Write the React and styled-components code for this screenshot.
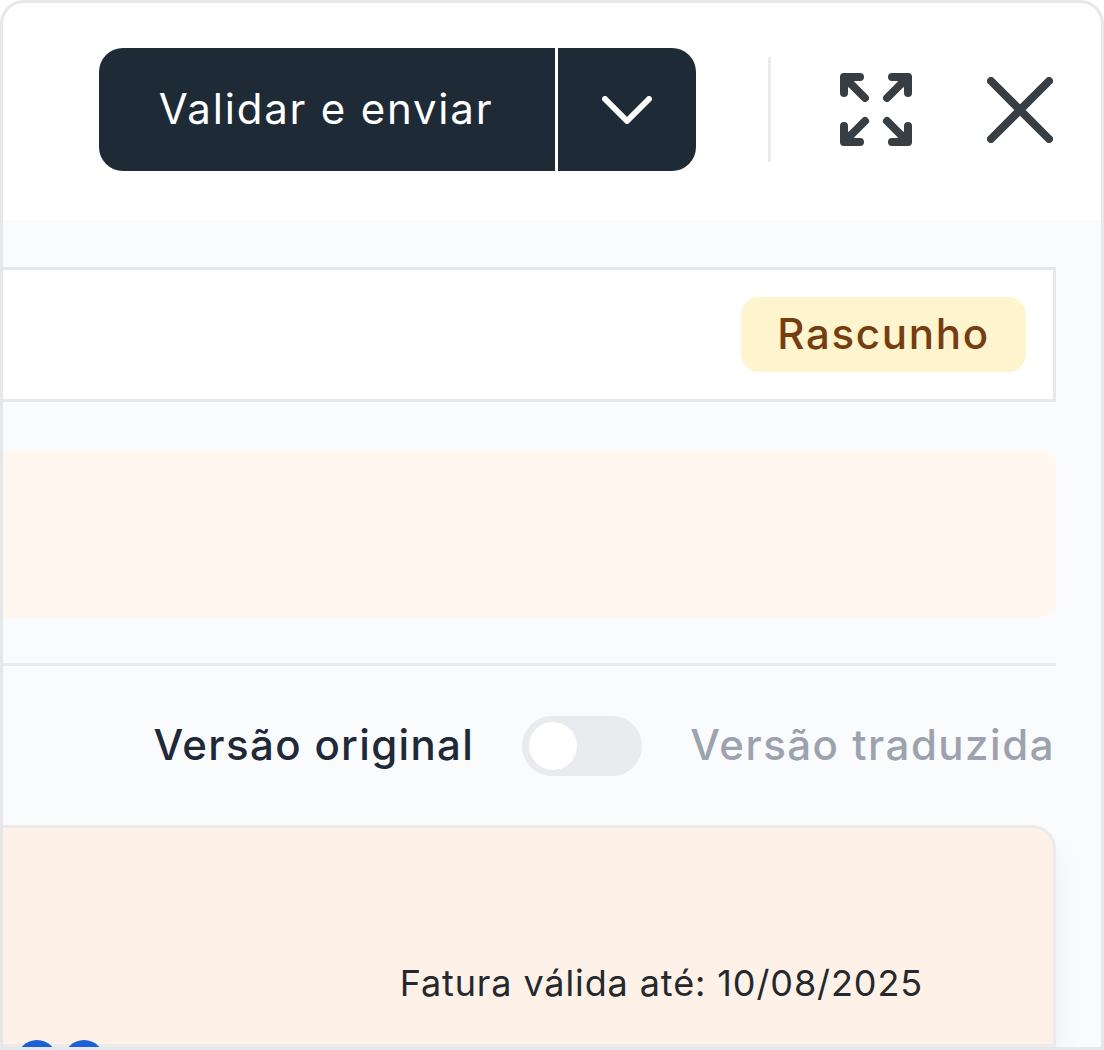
import React from 'react';
import styled, { createGlobalStyle } from 'styled-components';

const GlobalStyle = createGlobalStyle`
  html, body {
    margin: 0;
    padding: 0;
    background: #fff;
  }
  * {
    box-sizing: border-box;
  }
`;

const Frame = styled.div`
  width: 1104px;
  height: 1050px;
  display: flex;
  flex-direction: column;
  overflow: hidden;
  background: #fafbfd;
  border: 3px solid #e5e7eb;
  border-radius: 24px 24px 0 0;
  font-family: Inter, 'Liberation Sans', sans-serif;
`;

const Header = styled.header`
  height: 217px;
  flex-shrink: 0;
  display: flex;
  align-items: flex-start;
  justify-content: flex-end;
  padding: 45px 48px 0 0;
  background: #fff;
`;

const SplitButton = styled.div`
  display: flex;
  width: 597px;
  height: 123px;
  border-radius: 24px;
  overflow: hidden;
  background: #1f2a37;
  color: #fff;
`;

const MainAction = styled.div`
  width: 459px;
  display: flex;
  align-items: center;
  justify-content: center;
  padding: 0 2px 3px 0;
  border-right: 3px solid #fff;
  font-size: 42px;
  font-weight: 400;
  letter-spacing: 1.8px;
`;

const CaretAction = styled.div`
  flex: 1;
  display: flex;
  align-items: center;
  justify-content: center;
`;

const HeaderDivider = styled.div`
  width: 3px;
  height: 105px;
  margin: 9px 0 0 72px;
  background: #e9ebee;
`;

const IconSlot = styled.div`
  display: flex;
  margin: ${(p) => p.$margin};
  color: #373e44;
`;

const Body = styled.main`
  flex: 1;
  display: flex;
  flex-direction: column;
  padding: 47px 45px 0 0;
`;

const StatusRow = styled.div`
  height: 135px;
  flex-shrink: 0;
  display: flex;
  align-items: center;
  justify-content: flex-end;
  padding-right: 27px;
  background: #fff;
  border: 3px solid #e5e7eb;
  border-left: 0;
`;

const Badge = styled.span`
  width: 285px;
  height: 75px;
  display: flex;
  align-items: center;
  justify-content: center;
  padding-bottom: 3px;
  border-radius: 18px;
  background: #fef4cd;
  color: #753d10;
  font-size: 42px;
  font-weight: 500;
  letter-spacing: 1.7px;
`;

const Notice = styled.div`
  height: 168px;
  flex-shrink: 0;
  margin-top: 48px;
  border-radius: 0 18px 18px 0;
  background: #fff7f0;
`;

const Rule = styled.hr`
  width: 100%;
  height: 3px;
  flex-shrink: 0;
  margin: 45px 0 0;
  border: 0;
  background: #e9ebee;
`;

const ToggleRow = styled.div`
  height: 159px;
  flex-shrink: 0;
  display: flex;
  align-items: center;
  justify-content: flex-end;
  gap: 48px;
  padding-right: 1px;
`;

const ToggleLabel = styled.span`
  padding-bottom: 3px;
  font-size: 42px;
  font-weight: 500;
  letter-spacing: ${(p) => (p.$muted ? '1.5px' : '1.35px')};
  color: ${(p) => (p.$muted ? '#9ca3af' : '#1f2937')};
`;

const Toggle = styled.div`
  width: 120px;
  height: 60px;
  display: flex;
  align-items: center;
  padding-left: 7px;
  border-radius: 30px;
  background: #e9ebee;
`;

const Knob = styled.div`
  width: 48px;
  height: 48px;
  border-radius: 50%;
  background: #fff;
`;

const Card = styled.section`
  flex: 1;
  position: relative;
  display: flex;
  flex-direction: column;
  justify-content: flex-end;
  background: #fef1e7;
  border: 3px solid #e9ebee;
  border-left: 0;
  border-radius: 0 24px 0 0;
  box-shadow: 0 20px 30px rgba(17, 24, 39, 0.06);
`;

const Validity = styled.p`
  margin: 0 0 39px;
  padding-right: 130px;
  text-align: right;
  font-size: 36px;
  font-weight: 400;
  letter-spacing: 0.89px;
  color: #25292e;
`;

const Dots = styled.div`
  position: absolute;
  top: 212px;
  left: 14px;
  display: flex;
  gap: 7px;
`;

const Dot = styled.span`
  width: 40px;
  height: 40px;
  border-radius: 50%;
  background: #1d5fd6;
`;

const Chevron = () => (
  <svg width="50" height="28" viewBox="0 0 50 28" fill="none" stroke="currentColor" strokeWidth="6" strokeLinecap="round" strokeLinejoin="round">
    <path d="M3 3 L25 25 L47 3" />
  </svg>
);

const ExpandIcon = () => (
  <svg width="72" height="73" viewBox="0 0 72 73" fill="currentColor" stroke="currentColor" strokeWidth="8" strokeLinecap="round" strokeLinejoin="round">
    <path d="M4 4 H20 M4 4 V20 M4 4 L25 25 M4 4 L13 4 L4 13 Z" />
    <path d="M68 4 H52 M68 4 V20 M68 4 L47 25 M68 4 L59 4 L68 13 Z" />
    <path d="M4 69 H20 M4 69 V53 M4 69 L25 48 M4 69 L13 69 L4 60 Z" />
    <path d="M68 69 H52 M68 69 V53 M68 69 L47 48 M68 69 L59 69 L68 60 Z" />
  </svg>
);

const CloseIcon = () => (
  <svg width="66" height="66" viewBox="0 0 66 66" fill="none" stroke="currentColor" strokeWidth="8" strokeLinecap="round">
    <path d="M4 4 L62 62 M62 4 L4 62" />
  </svg>
);

export default function App() {
  return (
    <>
      <GlobalStyle />
      <Frame>
        <Header>
          <SplitButton>
            <MainAction>Validar e enviar</MainAction>
            <CaretAction>
              <Chevron />
            </CaretAction>
          </SplitButton>
          <HeaderDivider />
          <IconSlot $margin="25px 0 0 69px">
            <ExpandIcon />
          </IconSlot>
          <IconSlot $margin="29px 0 0 75px">
            <CloseIcon />
          </IconSlot>
        </Header>
        <Body>
          <StatusRow>
            <Badge>Rascunho</Badge>
          </StatusRow>
          <Notice />
          <Rule />
          <ToggleRow>
            <ToggleLabel>Versão original</ToggleLabel>
            <Toggle>
              <Knob />
            </Toggle>
            <ToggleLabel $muted>Versão traduzida</ToggleLabel>
          </ToggleRow>
          <Card>
            <Validity>Fatura válida até: 10/08/2025</Validity>
            <Dots>
              <Dot />
              <Dot />
            </Dots>
          </Card>
        </Body>
      </Frame>
    </>
  );
}
